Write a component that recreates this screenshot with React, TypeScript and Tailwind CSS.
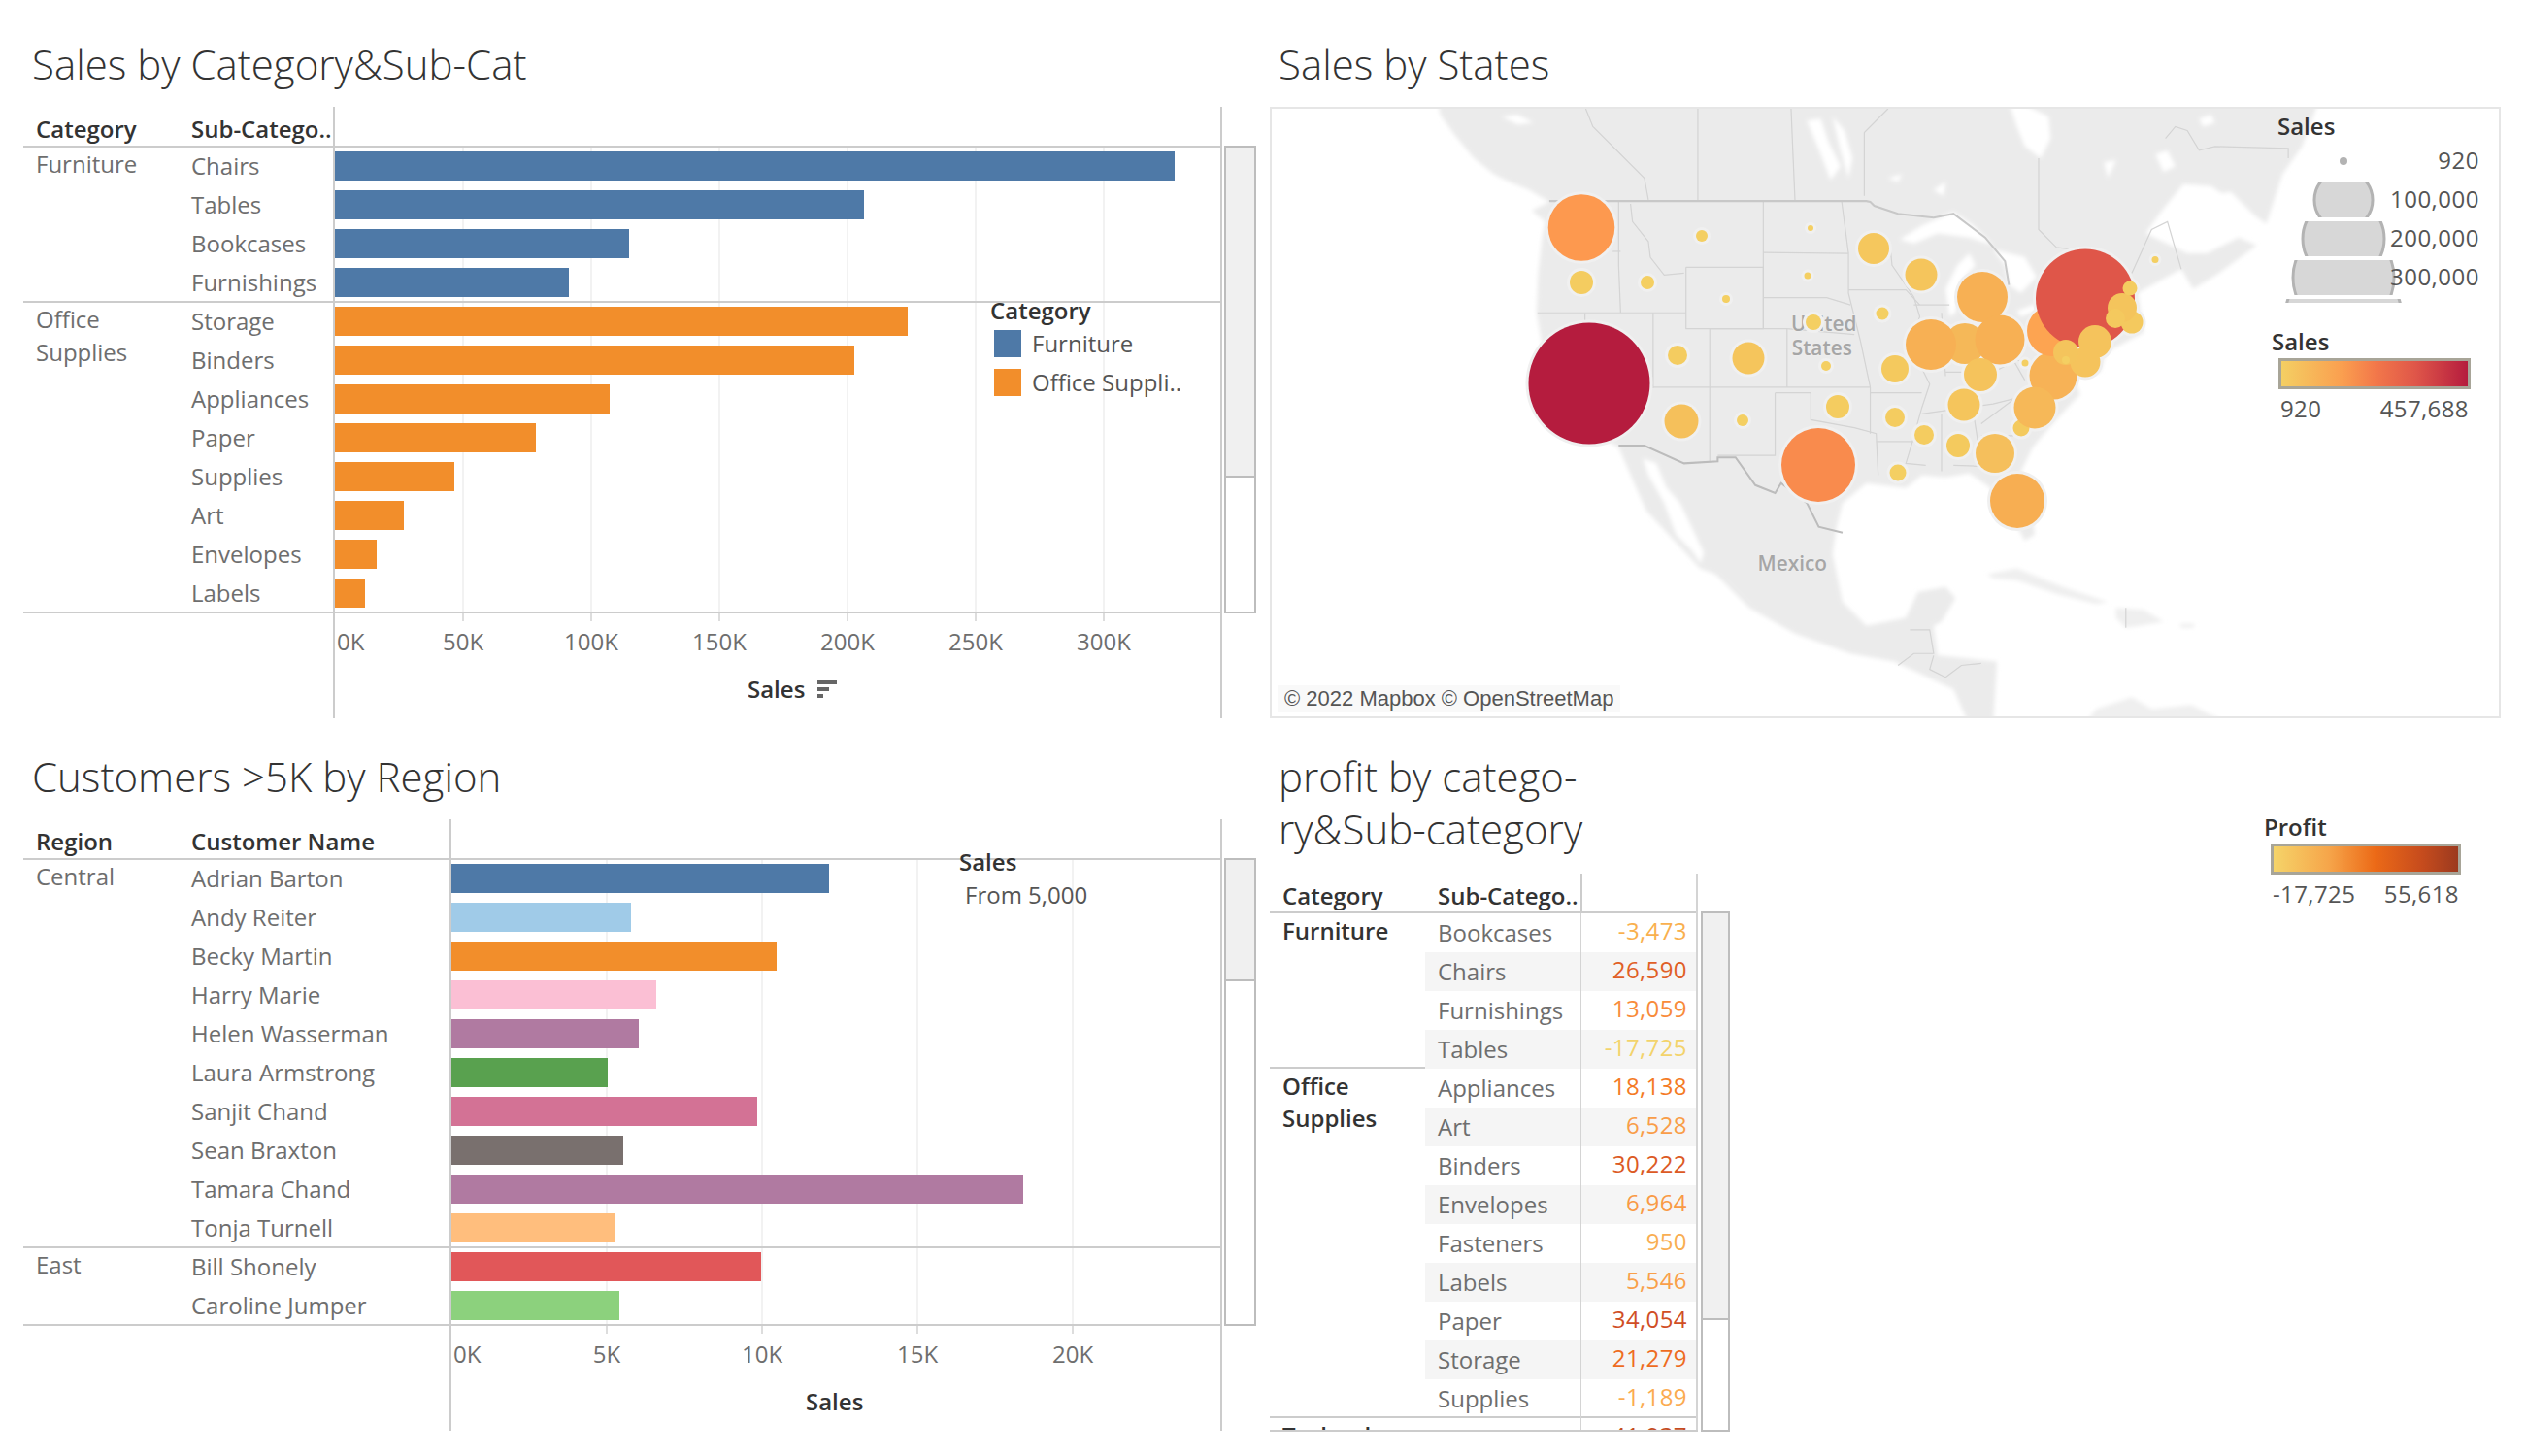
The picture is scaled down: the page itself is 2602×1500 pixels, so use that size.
import React from "react";

type Bar = { label: string; value: number; color: string };
type Group = { name: string[]; rows: Bar[] };

const BLUE = "#4e79a7";
const ORANGE = "#f28e2b";

const categoryGroups: Group[] = [
  {
    name: ["Furniture"],
    rows: [
      { label: "Chairs", value: 865, color: BLUE },
      { label: "Tables", value: 545, color: BLUE },
      { label: "Bookcases", value: 303, color: BLUE },
      { label: "Furnishings", value: 241, color: BLUE },
    ],
  },
  {
    name: ["Office", "Supplies"],
    rows: [
      { label: "Storage", value: 590, color: ORANGE },
      { label: "Binders", value: 535, color: ORANGE },
      { label: "Appliances", value: 283, color: ORANGE },
      { label: "Paper", value: 207, color: ORANGE },
      { label: "Supplies", value: 123, color: ORANGE },
      { label: "Art", value: 71, color: ORANGE },
      { label: "Envelopes", value: 43, color: ORANGE },
      { label: "Labels", value: 31, color: ORANGE },
    ],
  },
];

const customerGroups: Group[] = [
  {
    name: ["Central"],
    rows: [
      { label: "Adrian Barton", value: 389, color: "#4e79a7" },
      { label: "Andy Reiter", value: 185, color: "#a0cbe8" },
      { label: "Becky Martin", value: 335, color: "#f28e2b" },
      { label: "Harry Marie", value: 211, color: "#fbbfd4" },
      { label: "Helen Wasserman", value: 193, color: "#b07aa1" },
      { label: "Laura Armstrong", value: 161, color: "#59a14f" },
      { label: "Sanjit Chand", value: 315, color: "#d37295" },
      { label: "Sean Braxton", value: 177, color: "#79706e" },
      { label: "Tamara Chand", value: 589, color: "#b07aa1" },
      { label: "Tonja Turnell", value: 169, color: "#ffbe7d" },
    ],
  },
  {
    name: ["East"],
    rows: [
      { label: "Bill Shonely", value: 319, color: "#e15759" },
      { label: "Caroline Jumper", value: 173, color: "#8cd17d" },
    ],
  },
];

const salesTicks = ["0K", "50K", "100K", "150K", "200K", "250K", "300K"];
const customerTicks = ["0K", "5K", "10K", "15K", "20K"];

function Scrollbar({ height, thumb, className }: { height: number; thumb: number; className: string }) {
  return (
    <div className={`border-2 border-[#bdbdbd] ${className}`} style={{ height }}>
      <div className="bg-[#f0f0f0] border-b-2 border-[#bdbdbd]" style={{ height: thumb }} />
    </div>
  );
}

function SortIcon() {
  return (
    <svg width="20" height="19" viewBox="0 0 20 19" className="ml-[13px] fill-[#666666]">
      <rect x="0" y="0" width="20" height="4" />
      <rect x="0" y="7" width="12" height="4" />
      <rect x="0" y="14" width="6" height="4" />
    </svg>
  );
}

function BarChart(props: {
  headers: [string, string];
  groups: Group[];
  subWidth: number;
  tickStep: number;
  ticks: string[];
  thumb: number;
  sort?: boolean;
  children?: React.ReactNode;
}) {
  const { headers, groups, subWidth, tickStep, ticks, thumb, sort, children } = props;
  const plotLeft = 173 + subWidth;
  return (
    <div className="flex items-start ml-[24px]">
      <div className="relative w-[1235px] h-[630px] border-r-2 border-[#cccccc]">
        {ticks.slice(1).map((_, i) => (
          <div
            key={i}
            className="absolute top-[42px] h-[488px] w-[2px] bg-[#f2f2f2]"
            style={{ left: plotLeft + tickStep * (i + 1) + 1 }}
          />
        ))}
        <div className="relative flex h-[42px] border-b-2 border-[#cccccc] text-[#333333] font-semibold leading-[46px]">
          <div className="w-[173px] pl-[13px]">{headers[0]}</div>
          <div className="whitespace-nowrap" style={{ width: subWidth }}>
            {headers[1]}
          </div>
          <div className="flex-1 border-l-2 border-[#cccccc]" />
        </div>
        {groups.map((g) => (
          <div
            key={g.name.join()}
            className="relative flex border-b-2 border-[#cccccc]"
            style={{ height: g.rows.length * 40 }}
          >
            <div className="w-[173px] pl-[13px] leading-[34px] text-[#6e6e6e]">
              {g.name.map((n) => (
                <div key={n}>{n}</div>
              ))}
            </div>
            <div className="flex-1">
              {g.rows.map((r) => (
                <div key={r.label} className="flex h-[40px]">
                  <div className="leading-[38px] text-[#6e6e6e] whitespace-nowrap" style={{ width: subWidth }}>
                    {r.label}
                  </div>
                  <div className="flex-1 border-l-2 border-[#cccccc] pt-[4px]">
                    <div className="h-[30px]" style={{ width: r.value, background: r.color }} />
                  </div>
                </div>
              ))}
            </div>
          </div>
        ))}
        <div className="flex h-[108px]">
          <div style={{ width: plotLeft }} />
          <div className="relative flex-1 border-l-2 border-[#cccccc] text-[#6e6e6e]">
            {ticks.map((t, i) => (
              <React.Fragment key={t}>
                {i > 0 && (
                  <div className="absolute top-0 h-[8px] w-[2px] bg-[#dddddd]" style={{ left: tickStep * i - 1 }} />
                )}
                <div
                  className={`absolute top-[10px] leading-[38px] whitespace-nowrap ${i > 0 ? "-translate-x-1/2" : ""}`}
                  style={{ left: i === 0 ? 2 : tickStep * i }}
                >
                  {t}
                </div>
              </React.Fragment>
            ))}
            <div
              className="absolute top-[58px] flex items-center leading-[40px] text-[#333333] font-semibold"
              style={{ left: sort ? 425 : 365 }}
            >
              Sales
              {sort && <SortIcon />}
            </div>
          </div>
        </div>
        {children}
      </div>
      <Scrollbar height={482} thumb={thumb} className="w-[33px] mt-[40px] ml-[2px]" />
    </div>
  );
}

function ChartTitle({ children, className }: { children: React.ReactNode; className: string }) {
  return <div className={`pl-[33px] text-[42px] leading-[54px] font-light text-[#333333] ${className}`}>{children}</div>;
}

const circles: [number, number, number, string][] = [
  [1637, 395, 62.5, "#b51c3e"],
  [1873, 479, 38, "#f98b4d"],
  [1629, 234.5, 34.3, "#fd994f"],
  [2115, 387, 24.5, "#f7b256"],
  [2114, 341, 26, "#fda451"],
  [2148, 307.5, 51, "#df5649"],
  [2082, 441, 8.5, "#f4ca5e"],
  [2096, 420, 21.5, "#f6b858"],
  [2078, 516, 28, "#f7ae52"],
  [2055, 467, 20, "#f5bf5c"],
  [2042, 306, 26, "#f7b054"],
  [2024, 354, 21, "#f5b858"],
  [2060, 350, 25.5, "#f7b054"],
  [1989, 355, 26, "#f7b054"],
  [2040, 386, 17, "#f5c35c"],
  [2023, 417, 16.5, "#f5c55c"],
  [1982, 448, 10, "#f4cc60"],
  [2017, 459, 12, "#f4ca5e"],
  [1732, 434, 17.5, "#f5c05b"],
  [1801, 369, 16.5, "#f5c55c"],
  [1979, 283, 16.5, "#f5c55c"],
  [1930, 256, 16, "#f5c75d"],
  [1952, 380, 14, "#f4c95e"],
  [1893, 419, 12, "#f4cc60"],
  [1952, 430, 10, "#f4cc60"],
  [1955, 487, 8.5, "#f4cf62"],
  [1629, 291, 12, "#f4cc60"],
  [1728, 366, 10, "#f4cc60"],
  [1697, 291, 7, "#f4cf62"],
  [1753, 243, 6, "#f4cf62"],
  [1865, 235, 3, "#f4cf62"],
  [1862, 284, 3.5, "#f4cf62"],
  [1778, 308, 4, "#f4cf62"],
  [1868, 332, 8, "#f4cf62"],
  [1881, 377, 5, "#f4cf62"],
  [1795, 433, 6, "#f4cf62"],
  [1939, 323, 6.5, "#f4cf62"],
  [2086, 374, 3.5, "#f4cf62"],
  [2220, 267.5, 3.5, "#f4cf62"],
  [2158, 352, 17, "#f5c35c"],
  [2148, 373, 15.5, "#f5c35c"],
  [2128, 363, 13, "#f4c45c"],
  [2128, 371, 4, "#f4cf62"],
  [2196, 332, 11.5, "#f4c95e"],
  [2186, 317, 15, "#f4c45c"],
  [2179, 328, 10, "#f4c95e"],
  [2194, 297, 7.5, "#f4cc60"],
];

const landPath =
  "M200 -10 L205 20 L240 70 L290 130 L340 170 L380 190 L430 210 L480 240 L436 262 L470 290 L462 330 L452 420 L448 520 L460 590 L480 680 L530 770 L620 840 L655 860 L690 940 L725 1020 L800 1100 L860 1165 L900 1180 L985 1265 L1100 1330 L1240 1380 L1350 1400 L1500 1470 L1540 1560 L1600 1560 L1610 1400 L1460 1385 L1450 1310 L1470 1300 L1505 1240 L1480 1212 L1410 1225 L1380 1290 L1280 1310 L1220 1250 L1195 1130 L1205 1060 L1220 1000 L1280 950 L1380 962 L1420 930 L1480 935 L1540 925 L1590 960 L1650 1040 L1680 1095 L1705 1080 L1695 1000 L1670 920 L1700 860 L1750 800 L1820 725 L1800 680 L1870 670 L1885 620 L1980 570 L1965 470 L2075 410 L2105 460 L2170 420 L2265 350 L2220 330 L2140 370 L2090 370 L1985 320 L2020 270 L2080 195 L2150 200 L2290 295 L2330 170 L2380 100 L2420 -10 Z";

const whiteAreas = [
  "M716 888 L750 900 L775 960 L810 1000 L870 1125 L862 1152 L840 1120 L800 1080 L770 1000 L730 930 Z",
  "M1365 335 L1420 300 L1500 265 L1550 300 L1600 350 L1540 330 L1460 320 L1400 345 Z",
  "M1490 530 L1480 460 L1510 400 L1540 370 L1555 400 L1520 440 L1505 520 Z",
  "M1600 360 L1680 380 L1710 430 L1670 470 L1640 450 L1630 400 Z",
  "M1660 515 L1730 490 L1720 510 L1670 530 Z",
  "M1640 -10 L1690 0 L1740 25 L1745 80 L1720 130 L1680 100 L1660 50 Z",
  "M1130 35 L1165 30 L1185 90 L1215 150 L1190 185 L1165 120 Z",
  "M1195 25 L1225 60 L1245 130 L1235 180 L1215 110 Z",
  "M2130 225 L2200 215 L2270 285 L2220 270 L2170 260 Z",
  "M2040 260 L2100 210 L2130 225 L2070 290 Z",
  "M1450 210 L1480 190 L1475 225 Z",
  "M1335 180 L1370 170 L1360 190 Z",
  "M1880 140 L1910 135 L1890 180 Z",
  "M2010 120 L2040 110 L2060 150 L2030 165 Z",
  "M2120 30 L2150 20 L2160 40 L2130 50 Z",
  "M360 25 L400 20 L440 40 L400 45 Z",
];

const islandPaths = [
  "M1585 1180 L1660 1165 L1770 1210 L1890 1250 L1860 1255 L1760 1230 L1660 1195 L1600 1190 Z",
  "M1910 1265 L1980 1270 L2030 1300 L1970 1310 L1935 1315 L1910 1290 Z",
  "M2070 1305 L2110 1305 L2105 1315 L2075 1315 Z",
  "M1830 1560 L1860 1520 L1950 1490 L2000 1520 L2100 1510 L2200 1560 Z",
];

const borderLines = [
  "M570 0 L590 50 L660 120 L720 180 L730 235",
  "M855 0 L855 235",
  "M1090 0 L1095 120 L1100 235",
  "M1335 5 L1275 65 L1275 225",
  "M1715 130 L1715 310 L1760 355 L1800 360",
  "M1950 420 L2000 310 L2040 290 L2075 410",
  "M2035 80 L2060 50 L2090 60 L2120 110 L2160 100 L2345 105 L2345 130",
  "M640 365 L660 365",
  "M685 245 L690 290 L730 340 L735 380 L770 425 L820 420",
  "M655 238 L655 400 L660 520",
  "M450 520 L825 520",
  "M570 520 L570 540",
  "M742 520 L742 710",
  "M825 405 L1020 405 L1020 560 L825 560 L825 405",
  "M885 560 L885 895",
  "M1020 240 L1020 560",
  "M1020 368 L1235 370",
  "M1020 482 L1180 482 L1240 500",
  "M1080 560 L1250 575",
  "M885 560 L1080 560 L1080 708",
  "M742 708 L1290 708",
  "M1050 722 L1050 880 L905 880",
  "M1050 722 L1140 722 L1140 790 L1250 810 L1305 825 L1310 930",
  "M1290 708 L1290 825",
  "M1290 722 L1420 722",
  "M1305 845 L1400 845",
  "M1218 240 L1235 370 L1235 470 L1265 590 L1290 708",
  "M1235 462 L1380 462 L1415 500",
  "M1340 350 L1345 400 L1400 480 L1415 530 L1390 600 L1440 700 L1420 760 L1395 850 L1380 900 L1430 905",
  "M1400 500 L1490 500",
  "M1470 520 L1480 680",
  "M1480 670 L1600 670 L1660 640 L1720 650 L1790 660",
  "M1420 775 L1600 750 L1720 720 L1800 700",
  "M1470 775 L1470 920",
  "M1550 770 L1570 900",
  "M1570 830 L1650 830 L1700 790",
  "M1570 800 L1650 740",
  "M1640 620 L1680 690",
  "M1740 540 L1960 490",
  "M1500 905 L1640 910",
  "M1390 1320 L1440 1320 L1450 1380 L1400 1380 L1360 1410",
  "M1450 1385 L1440 1420 L1480 1440 L1520 1410 L1570 1405",
  "M1935 1265 L1935 1315",
];

function MapChart() {
  return (
    <svg width="1264" height="626" viewBox="1310 112 1264 626" className="absolute inset-0">
      <defs>
        <filter id="soft" x="-5%" y="-5%" width="110%" height="110%">
          <feGaussianBlur stdDeviation="5" />
        </filter>
        <filter id="softer" x="-5%" y="-5%" width="110%" height="110%">
          <feGaussianBlur stdDeviation="1" />
        </filter>
      </defs>
      <g transform="translate(1400 110) scale(0.40816)">
        <g filter="url(#soft)">
          <path d={landPath} fill="#ebebeb" />
          {islandPaths.map((d) => (
            <path key={d} d={d} fill="#efefef" />
          ))}
          {whiteAreas.map((d) => (
            <path key={d} d={d} fill="#ffffff" />
          ))}
        </g>
        <g filter="url(#softer)" fill="none" stroke="#d4d4d4" strokeWidth="3">
          {borderLines.map((d) => (
            <path key={d} d={d} />
          ))}
          <path d="M480 238 L1280 238 L1290 240 L1300 250 L1360 270 L1450 280 L1500 270 L1580 330 L1630 390 L1640 450" strokeWidth="5" stroke="#c8c8c8" />
          <path d="M655 855 L720 855 L820 900 L905 895 L905 885 L950 885 L1000 955 L1050 975 L1065 950 L1130 1000 L1160 1060 L1220 1075" strokeWidth="5" stroke="#bcbcbc" />
        </g>
        <g fontSize="51" fill="#a6a6a6" stroke="#eeeeee" strokeWidth="4" paintOrder="stroke" fontWeight="600">
          <text x="1090" y="565">United</text>
          <text x="1092" y="628">States</text>
          <text x="1006" y="1170">Mexico</text>
        </g>
      </g>
      {circles.map(([cx, cy, r]) => (
        <circle key={`h-${cx}-${cy}`} cx={cx} cy={cy} r={r + 3} fill="#f0f0f0" />
      ))}
      {circles.map(([cx, cy, r, c]) => (
        <circle key={`${cx}-${cy}`} cx={cx} cy={cy} r={r} fill={c} />
      ))}
    </svg>
  );
}

function SizeLegend() {
  const rows = [
    { label: "100,000", r: 30, y: 204, top: 186, h: 36 },
    { label: "200,000", r: 42, y: 244, top: 226, h: 36 },
    { label: "300,000", r: 52, y: 284, top: 266, h: 36 },
  ];
  return (
    <div className="absolute left-[1036px] top-0 w-[208px] h-[210px] text-[#555555]">
      <div className="absolute left-0 top-px leading-[34px] text-[#333333] font-semibold">Sales</div>
      <svg width="130" height="210" viewBox="2349 110 130 210" className="absolute left-[3px] top-0">
        <defs>
          {rows.map((r) => (
            <clipPath key={r.label} id={`band-${r.r}`}>
              <rect x="2349" y={r.top} width="130" height={r.h} />
            </clipPath>
          ))}
          <clipPath id="band-60">
            <rect x="2349" y="306" width="130" height="4" />
          </clipPath>
        </defs>
        <circle cx="2414" cy="164" r="4" fill="#b3b3b3" />
        {rows.map((r) => (
          <circle
            key={r.label}
            cx="2414"
            cy={r.y}
            r={r.r}
            fill="#d7d7d7"
            stroke="#b3b3b3"
            strokeWidth="3"
            clipPath={`url(#band-${r.r})`}
          />
        ))}
        <circle cx="2414" cy="325" r="60" fill="#d7d7d7" stroke="#b3b3b3" strokeWidth="3" clipPath="url(#band-60)" />
      </svg>
      <div className="absolute right-0 top-[33px] text-right tracking-[0.5px]">
        {["920", "100,000", "200,000", "300,000"].map((t) => (
          <div key={t} className="h-[40px] leading-[40px]">
            {t}
          </div>
        ))}
      </div>
    </div>
  );
}

function GradientLegend(props: {
  title: string;
  min: string;
  max: string;
  width: number;
  barClass: string;
  className: string;
}) {
  return (
    <div className={`text-[#555555] ${props.className}`} style={{ width: props.width }}>
      <div className="-ml-[7px] leading-[34px] font-semibold text-[#333333]">{props.title}</div>
      <div className={`h-[32px] border-[3px] border-[#a8a598] ${props.barClass}`} />
      <div className="flex justify-between px-[2px] leading-[40px] tracking-[0.4px]">
        <span>{props.min}</span>
        <span>{props.max}</span>
      </div>
    </div>
  );
}

const profitRows: { group: string[]; rows: [string, string, string][] }[] = [
  {
    group: ["Furniture"],
    rows: [
      ["Bookcases", "-3,473", "#f9b04e"],
      ["Chairs", "26,590", "#e05f26"],
      ["Furnishings", "13,059", "#f88b3a"],
      ["Tables", "-17,725", "#f3d36b"],
    ],
  },
  {
    group: ["Office", "Supplies"],
    rows: [
      ["Appliances", "18,138", "#f47a24"],
      ["Art", "6,528", "#f99d48"],
      ["Binders", "30,222", "#dc5a24"],
      ["Envelopes", "6,964", "#f99a45"],
      ["Fasteners", "950", "#f9ae52"],
      ["Labels", "5,546", "#f9a04a"],
      ["Paper", "34,054", "#d04e25"],
      ["Storage", "21,279", "#ee6c1f"],
      ["Supplies", "-1,189", "#fbab50"],
    ],
  },
  {
    group: ["Technology"],
    rows: [["Accessories", "41,937", "#c44b22"]],
  },
];

function ProfitTable() {
  return (
    <div className="flex items-start ml-[8px]">
      <div className="w-[441px] h-[575px] overflow-hidden border-b-2 border-[#cccccc] relative">
        <div className="flex h-[41px] w-[439px] border-b-2 border-[#cccccc] font-semibold text-[#333333] leading-[46px]">
          <div className="w-[160px] pl-[13px]">Category</div>
          <div className="w-[160px] pl-[13px] whitespace-nowrap">Sub-Catego..</div>
          <div className="flex-1 border-l-2 border-[#cccccc]" />
        </div>
        {profitRows.map((g) => (
          <div
            key={g.group[0]}
            className="flex w-[439px] border-b-2 border-[#cccccc]"
            style={{ height: g.rows.length * 40 }}
          >
            <div className="w-[160px] pl-[13px] pt-px leading-[33px] font-semibold text-[#333333]">
              {g.group.map((n) => (
                <div key={n}>{n}</div>
              ))}
            </div>
            <div className="flex-1">
              {g.rows.map(([name, value, color], i) => (
                <div key={name} className={`flex h-[40px] ${i % 2 === 1 ? "bg-[#f5f5f5]" : ""}`}>
                  <div className="w-[160px] pl-[13px] leading-[40px] text-[#6e6e6e]">{name}</div>
                  <div
                    className="flex-1 border-l border-[#d4d4d4] pr-[9px] text-right leading-[36px] tracking-[0.4px]"
                    style={{ color }}
                  >
                    {value}
                  </div>
                </div>
              ))}
            </div>
          </div>
        ))}
        <div className="absolute right-0 top-0 bottom-0 w-[2px] bg-[#d4d4d4]" />
      </div>
      <Scrollbar height={536} thumb={419} className="w-[30px] mt-[39px] ml-[3px]" />
    </div>
  );
}

export default function App() {
  return (
    <div className="w-[2602px] h-[1500px] overflow-hidden bg-white grid grid-cols-[1300px_1302px] grid-rows-[750px_750px] text-[24px] font-['Open_Sans',sans-serif]">
      <section>
        <ChartTitle className="pt-[39px] h-[110px]">Sales by Category&amp;Sub-Cat</ChartTitle>
        <BarChart
          headers={["Category", "Sub-Catego.."]}
          groups={categoryGroups}
          subWidth={146}
          tickStep={132}
          ticks={salesTicks}
          thumb={340}
          sort
        >
          <div className="absolute left-[996px] top-[192px] text-[#555555]">
            <div className="leading-[36px] font-semibold text-[#333333]">Category</div>
            <div className="-mt-[4px]">
              {[
                { c: BLUE, t: "Furniture" },
                { c: ORANGE, t: "Office Suppli.." },
              ].map((l) => (
                <div key={l.t} className="flex items-center gap-[11px] h-[40px] pl-[4px]">
                  <span className="w-[28px] h-[28px]" style={{ background: l.c }} />
                  <span>{l.t}</span>
                </div>
              ))}
            </div>
          </div>
        </BarChart>
      </section>

      <section>
        <ChartTitle className="pt-[39px] h-[110px] !pl-[17px]">Sales by States</ChartTitle>
        <div className="relative ml-[8px] w-[1268px] h-[630px] border-2 border-[#e6e6e6] overflow-hidden">
          <MapChart />
          <div className="absolute left-[6px] bottom-[4px] h-[28px] px-[7px] bg-[#f9f9f9] text-[#555555] text-[22px] leading-[28px] font-['Liberation_Sans',sans-serif]">
            © 2022 Mapbox © OpenStreetMap
          </div>
          <SizeLegend />
          <GradientLegend
            title="Sales"
            min="920"
            max="457,688"
            width={198}
            barClass="bg-[linear-gradient(90deg,#f4cf63_0%,#fa9e4f_33%,#f3794a_50%,#df5649_72%,#b51c3e_100%)]"
            className="absolute left-[1037px] top-[223px]"
          />
        </div>
      </section>

      <section>
        <ChartTitle className="pt-[23px] h-[94px]">Customers &gt;5K by Region</ChartTitle>
        <BarChart
          headers={["Region", "Customer Name"]}
          groups={customerGroups}
          subWidth={266}
          tickStep={160}
          ticks={customerTicks}
          thumb={125}
        >
          <div className="absolute left-[964px] top-[27px] text-[#555555]">
            <div className="leading-[34px] font-semibold text-[#333333]">Sales</div>
            <div className="pl-[6px] leading-[34px]">From 5,000</div>
          </div>
        </BarChart>
      </section>

      <section className="flex justify-between">
        <div>
          <ChartTitle className="pt-[23px] h-[150px] !pl-[17px]">
            <div>profit by catego-</div>
            <div>ry&amp;Sub-category</div>
          </ChartTitle>
          <ProfitTable />
        </div>
        <GradientLegend
          title="Profit"
          min="-17,725"
          max="55,618"
          width={196}
          barClass="bg-[linear-gradient(90deg,#f5d469_0%,#f6a54a_30%,#ec6a17_55%,#c74c1d_80%,#9c3a1f_100%)]"
          className="mt-[85px] mr-[67px]"
        />
      </section>
    </div>
  );
}
